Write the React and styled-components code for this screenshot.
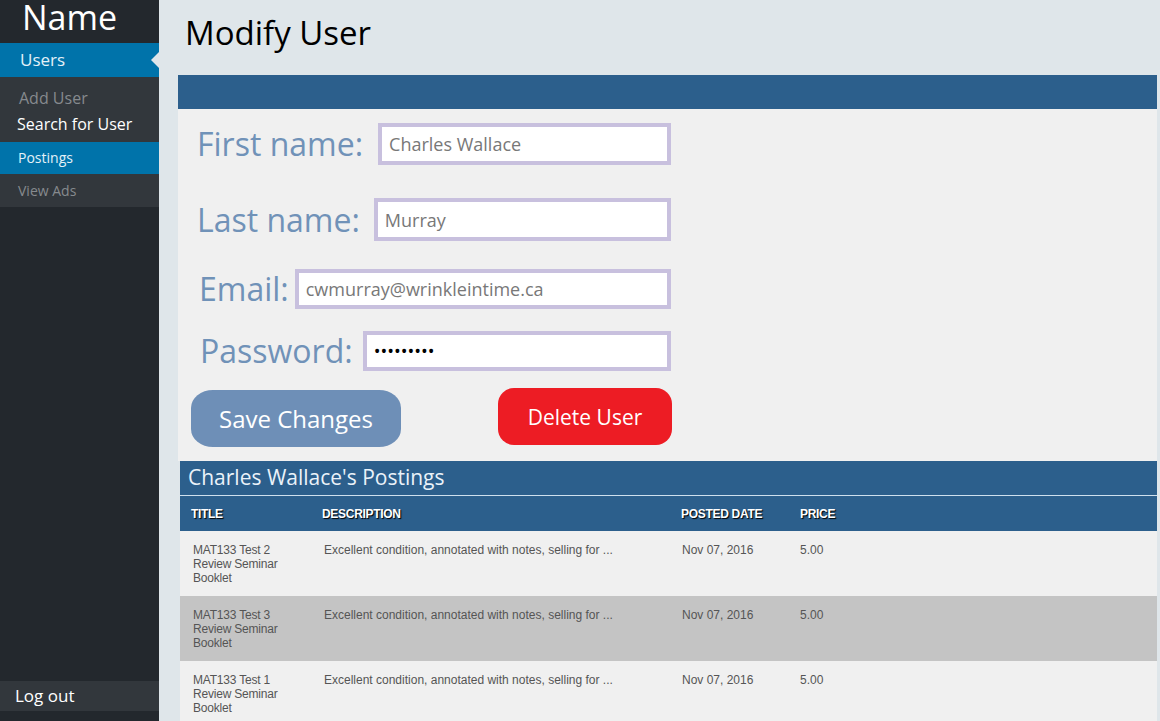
import React from "react";
import styled, { createGlobalStyle } from "styled-components";

const GlobalStyle = createGlobalStyle`
  body {
    margin: 0;
    font-family: "Open Sans", "Noto Sans", sans-serif;
    background: #dfe6ea;
  }
`;

const Page = styled.div`
  display: flex;
  height: 721px;
  overflow: hidden;
`;

const Sidebar = styled.nav`
  width: 159px;
  flex-shrink: 0;
  background: #23282d;
  display: flex;
  flex-direction: column;
`;

const Brand = styled.div`
  color: #fff;
  font-size: 34px;
  line-height: 34px;
  height: 34px;
  padding: 0 0 9px 22px;
`;

const MenuItem = styled.div`
  position: relative;
  background: ${(p) => (p.active ? "#0073aa" : "#32373c")};
  color: ${(p) => (p.dim ? "#868a8e" : p.active ? "#e4f1f8" : "#fff")};
  font-size: ${(p) => p.size || 14}px;
  height: ${(p) => p.h || 32}px;
  line-height: ${(p) => p.h || 32}px;
  padding-left: ${(p) => p.indent || 18}px;

  ${(p) =>
    p.arrow &&
    `&::after {
      content: "";
      position: absolute;
      right: 0;
      top: 9px;
      border: 8px solid transparent;
      border-right-color: #dfe6ea;
    }`}
`;

const SubMenu = styled.div`
  background: #32373c;
  padding: 8px 0 5px;
`;

const SubLink = styled.div`
  color: ${(p) => (p.dim ? "#868a8e" : "#fff")};
  font-size: 16px;
  line-height: 26px;
  padding-left: ${(p) => p.indent || 17}px;
`;

const Logout = styled.div`
  margin-top: auto;
  margin-bottom: 10px;
  background: #32373c;
  color: #fff;
  font-size: 17px;
  height: 30px;
  line-height: 30px;
  padding-left: 15px;
`;

const Main = styled.main`
  flex: 1;
  min-width: 0;
  padding: 0 3px 0 19px;
`;

const Title = styled.h1`
  margin: 0;
  height: 75px;
  padding: 13px 0 0 7px;
  box-sizing: border-box;
  font-weight: 400;
  font-size: 33px;
  line-height: 40px;
  color: #000;
`;

const BlueBar = styled.div`
  background: #2c5f8c;
  height: 34px;
`;

const FormPanel = styled.section`
  background: #f0f0f0;
  padding: 14px 0 14px 19px;
`;

const Row = styled.div`
  display: flex;
  align-items: center;
  width: 474px;
  gap: ${(p) => p.space || 14}px;
  margin-top: ${(p) => p.gap || 0}px;
  padding-left: ${(p) => p.indent || 0}px;
  box-sizing: border-box;
`;

const Label = styled.label`
  color: #7092b8;
  font-size: 32px;
  line-height: 40px;
  white-space: nowrap;
`;

const Input = styled.input`
  flex: 1;
  min-width: 0;
  height: ${(p) => p.h || 42}px;
  box-sizing: border-box;
  border: 4px solid #c8c0de;
  background: #fff;
  font-family: "Open Sans", sans-serif;
  font-size: 18px;
  color: ${(p) => (p.type === "password" ? "#000" : "#787878")};
  padding: 0 7px;
  outline: none;
`;

const Buttons = styled.div`
  display: flex;
  align-items: flex-start;
  margin-top: 19px;
  margin-left: -6px;
  gap: 97px;
`;

const Button = styled.button`
  border: none;
  color: #fff;
  font-family: "Open Sans", sans-serif;
  height: 57px;
  width: ${(p) => p.w}px;
  font-size: ${(p) => p.size}px;
  margin-top: ${(p) => (p.danger ? -2 : 0)}px;
  background: ${(p) => (p.danger ? "#ed1c24" : "#6e8fb7")};
  border-radius: ${(p) => (p.danger ? "16px" : "22px / 18px")};
`;

const PostingsHead = styled.div`
  background: #2c5f8c;
  color: #eaf2f9;
  font-size: 21px;
  height: 34px;
  line-height: 32px;
  padding-left: 8px;
  margin-left: 2px;
  border-bottom: 1px solid #cfe0ee;
`;

const Table = styled.table`
  margin-left: 2px;
  border-collapse: collapse;
  width: calc(100% - 2px);
  font-family: "Liberation Sans", Arial, sans-serif;
  font-size: 12px;
`;

const Th = styled.th`
  background: #2c5f8c;
  color: #fff;
  text-align: left;
  font-weight: 700;
  height: 35px;
  padding: 0 0 0 11px;
  width: ${(p) => (p.w ? p.w + "px" : "auto")};
  letter-spacing: -0.3px;
  text-shadow: 1px 1px 1px #000;
  box-sizing: border-box;
`;

const Tr = styled.tr`
  background: ${(p) => (p.shade ? "#c4c4c4" : "#f0f0f0")};
`;

const Td = styled.td`
  vertical-align: top;
  color: #555;
  height: 65px;
  padding: 12px 0 0 ${(p) => p.pad || 11}px;
  box-sizing: border-box;
  line-height: 14px;
`;

const TitleCell = styled.div`
  width: 100px;
  letter-spacing: -0.2px;
`;

const postings = [
  { title: "MAT133 Test 2 Review Seminar Booklet" },
  { title: "MAT133 Test 3 Review Seminar Booklet", shade: true },
  { title: "MAT133 Test 1 Review Seminar Booklet" },
];

export default function App() {
  return (
    <>
      <GlobalStyle />
      <Page>
        <Sidebar>
          <Brand>Name</Brand>
          <MenuItem active arrow size={17} h={34} indent={20}>
            Users
          </MenuItem>
          <SubMenu>
            <SubLink dim indent={19}>
              Add User
            </SubLink>
            <SubLink>Search for User</SubLink>
          </SubMenu>
          <MenuItem active>Postings</MenuItem>
          <MenuItem dim h={33}>
            View Ads
          </MenuItem>
          <Logout>Log out</Logout>
        </Sidebar>

        <Main>
          <Title>Modify User</Title>
          <BlueBar />
          <FormPanel>
            <Row space={15}>
              <Label>First name:</Label>
              <Input defaultValue="Charles Wallace" />
            </Row>
            <Row gap={33} space={14}>
              <Label>Last name:</Label>
              <Input h={43} defaultValue="Murray" />
            </Row>
            <Row gap={28} indent={2} space={6}>
              <Label>Email:</Label>
              <Input h={40} defaultValue="cwmurray@wrinkleintime.ca" />
            </Row>
            <Row gap={22} indent={3} space={10}>
              <Label>Password:</Label>
              <Input h={40} type="password" defaultValue="123456789" />
            </Row>
            <Buttons>
              <Button w={210} size={24}>
                Save Changes
              </Button>
              <Button danger w={174} size={21}>
                Delete User
              </Button>
            </Buttons>
          </FormPanel>

          <PostingsHead>Charles Wallace's Postings</PostingsHead>
          <Table>
            <thead>
              <tr>
                <Th w={131}>TITLE</Th>
                <Th w={359}>DESCRIPTION</Th>
                <Th w={119}>POSTED DATE</Th>
                <Th>PRICE</Th>
              </tr>
            </thead>
            <tbody>
              {postings.map((p) => (
                <Tr key={p.title} shade={p.shade}>
                  <Td pad={13}>
                    <TitleCell>{p.title}</TitleCell>
                  </Td>
                  <Td pad={13}>Excellent condition, annotated with notes, selling for ...</Td>
                  <Td pad={12}>Nov 07, 2016</Td>
                  <Td>5.00</Td>
                </Tr>
              ))}
            </tbody>
          </Table>
        </Main>
      </Page>
    </>
  );
}
